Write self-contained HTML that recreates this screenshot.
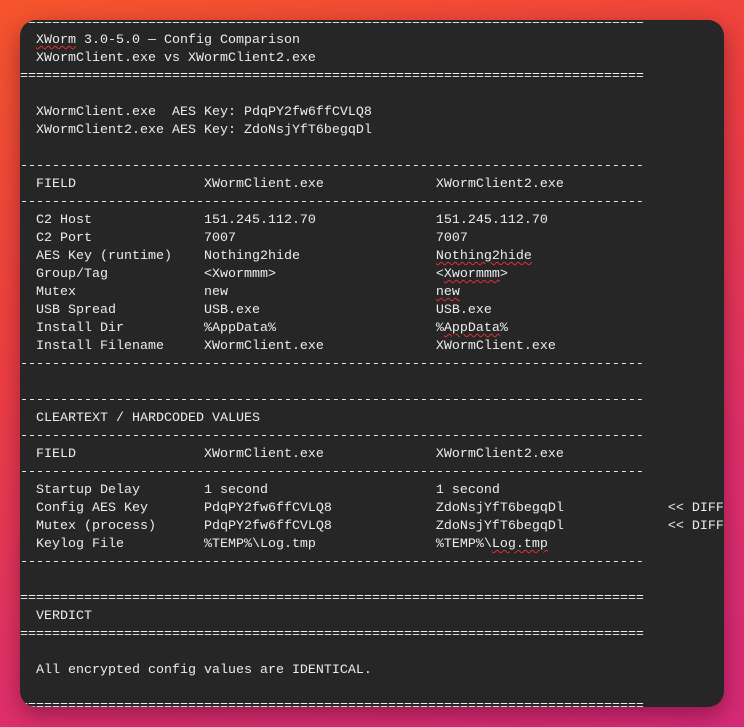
<!DOCTYPE html>
<html><head><meta charset="utf-8"><style>
html,body{margin:0;padding:0;width:744px;height:727px;overflow:hidden}
body{background:linear-gradient(160deg,#f5552c 0%,#ef4040 35%,#e0306a 70%,#d62a78 100%)}
.panel{position:absolute;left:20px;top:20px;width:704px;height:687px;background:#262626;border-radius:16px;overflow:hidden;box-shadow:0 8px 24px rgba(60,0,30,.45)}
pre{margin:0;position:absolute;left:0;top:-6px;font-family:"Liberation Mono","DejaVu Sans Mono",monospace;font-size:13.33px;line-height:18px;color:#ececec;white-space:pre}
u{text-decoration:underline wavy #e03030;text-decoration-thickness:1px;text-underline-offset:2px}
.d{display:inline-block;width:8px;line-height:10px;vertical-align:baseline}
</style></head><body><div class="panel"><pre>==============================================================================
  <u>XWorm</u> 3.0-5.0 <span class="d">—</span> Config Comparison
  XWormClient.exe vs XWormClient2.exe
==============================================================================

  XWormClient.exe  AES Key: PdqPY2fw6ffCVLQ8
  XWormClient2.exe AES Key: ZdoNsjYfT6begqDl

------------------------------------------------------------------------------
  FIELD                XWormClient.exe              XWormClient2.exe
------------------------------------------------------------------------------
  C2 Host              151.245.112.70               151.245.112.70
  C2 Port              7007                         7007
  AES Key (runtime)    Nothing2hide                 <u>Nothing2hide</u>
  Group/Tag            &lt;Xwormmm&gt;                    &lt;<u>Xwormmm</u>&gt;
  Mutex                new                          <u>new</u>
  USB Spread           USB.exe                      USB.exe
  Install Dir          %AppData%                    %<u>AppData</u>%
  Install Filename     XWormClient.exe              XWormClient.exe
------------------------------------------------------------------------------

------------------------------------------------------------------------------
  CLEARTEXT / HARDCODED VALUES
------------------------------------------------------------------------------
  FIELD                XWormClient.exe              XWormClient2.exe
------------------------------------------------------------------------------
  Startup Delay        1 second                     1 second
  Config AES Key       PdqPY2fw6ffCVLQ8             ZdoNsjYfT6begqDl             &lt;&lt; DIFF
  Mutex (process)      PdqPY2fw6ffCVLQ8             ZdoNsjYfT6begqDl             &lt;&lt; DIFF
  Keylog File          %TEMP%\Log.tmp               %TEMP%\<u>Log.tmp</u>
------------------------------------------------------------------------------

==============================================================================
  VERDICT
==============================================================================

  All encrypted config values are IDENTICAL.

==============================================================================
</pre></div></body></html>
